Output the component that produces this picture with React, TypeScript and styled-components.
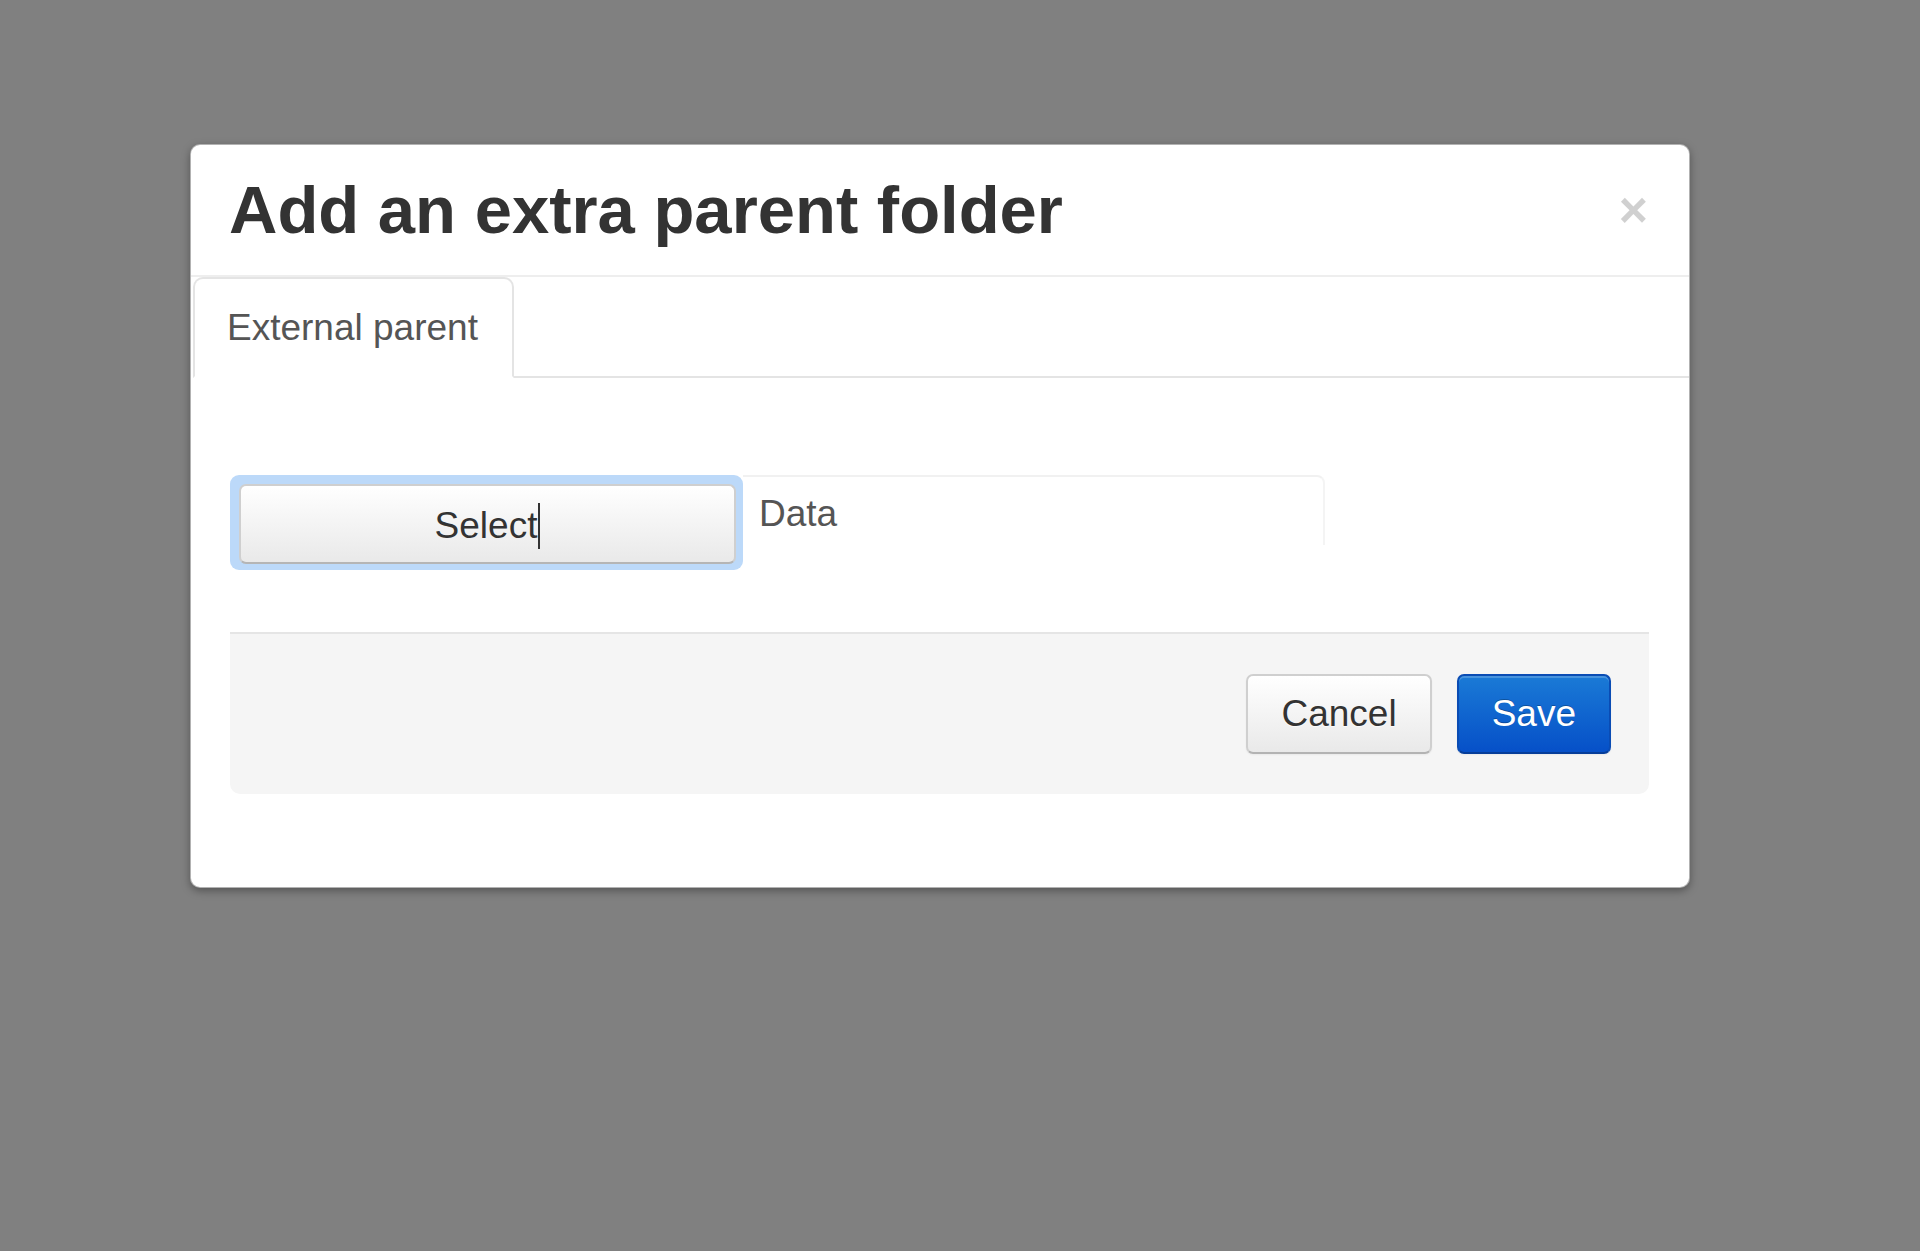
import React from "react";
import styled, { createGlobalStyle } from "styled-components";

const Global = createGlobalStyle`
  html, body {
    margin: 0;
    padding: 0;
    background: #808080;
    font-family: "Liberation Sans", Arial, Helvetica, sans-serif;
  }
  * { box-sizing: border-box; }
`;

const Backdrop = styled.div`
  min-height: 1251px;
  padding-top: 144px;
  padding-left: 190px;
`;

const Modal = styled.div`
  width: 1500px;
  height: 744px;
  background: #fff;
  border: 1px solid rgba(0, 0, 0, 0.3);
  border-radius: 10px;
  box-shadow: 0 3px 8px rgba(0, 0, 0, 0.35);
  display: flex;
  flex-direction: column;
  overflow: hidden;
`;

const Header = styled.div`
  height: 132px;
  display: flex;
  align-items: center;
  justify-content: space-between;
  padding: 0 41px 0 38px;
  border-bottom: 2px solid #eeeeee;
`;

const Title = styled.h3`
  margin: 0;
  font-size: 67px;
  line-height: 74px;
  font-weight: 700;
  color: #333;
`;

const Close = styled.button`
  border: 0;
  background: none;
  padding: 0;
  font-family: "Liberation Sans", Arial, sans-serif;
  font-size: 50px;
  font-weight: 700;
  line-height: 50px;
  color: #000;
  opacity: 0.18;
  cursor: pointer;
`;

const Tabs = styled.div`
  display: flex;
  padding-left: 2px;
`;

const Tab = styled.div`
  height: 101px;
  display: flex;
  align-items: center;
  padding: 0 34px 0 32px;
  font-size: 37px;
  color: #555;
  background: #fff;
  border: 2px solid #e4e4e4;
  border-bottom-color: transparent;
  border-radius: 10px 10px 0 0;
`;

const TabFill = styled.div`
  flex: 1;
  border-bottom: 2px solid #e4e4e4;
`;

const Body = styled.div`
  padding: 97px 40px 0 39px;
  display: flex;
  flex-direction: column;
`;

const FormRow = styled.div`
  display: flex;
  align-items: flex-start;
`;

const FocusRing = styled.div`
  padding: 9px 7px 6px 9px;
  background: #bcd9f9;
  border-radius: 9px;
`;

const SelectButton = styled.button`
  width: 497px;
  height: 80px;
  display: flex;
  align-items: center;
  justify-content: center;
  padding-top: 4px;
  font-family: "Liberation Sans", Arial, sans-serif;
  font-size: 37px;
  color: #333;
  background: linear-gradient(#ffffff, #e9e9e9);
  border: 2px solid #cfcfcf;
  border-bottom-color: #b5b5b5;
  border-radius: 7px;
  box-shadow: inset 0 2px 0 rgba(255, 255, 255, 0.6);
`;

const Caret = styled.span`
  display: inline-block;
  width: 2px;
  height: 46px;
  margin-left: 1px;
  background: #333;
`;

const DataInput = styled.div`
  width: 582px;
  height: 70px;
  padding: 15px 16px 0;
  font-size: 37px;
  line-height: 44px;
  color: #555;
  border-top: 2px solid #f1f1f1;
  border-right: 2px solid #f4f4f4;
  border-radius: 0 8px 0 0;
`;

const Actions = styled.div`
  margin-top: 62px;
  height: 162px;
  display: flex;
  align-items: center;
  justify-content: flex-end;
  gap: 25px;
  padding-right: 38px;
  background: #f5f5f5;
  border-top: 2px solid #e5e5e5;
  border-radius: 0 0 10px 10px;
`;

const ActionButton = styled.button<{ $primary?: boolean }>`
  height: 80px;
  padding: 0 33px;
  font-family: "Liberation Sans", Arial, sans-serif;
  font-size: 37px;
  border-radius: 7px;
  color: ${(p) => (p.$primary ? "#fff" : "#333")};
  background: ${(p) =>
    p.$primary
      ? "linear-gradient(#1a7ad6, #0650c8)"
      : "linear-gradient(#ffffff, #e9e9e9)"};
  border: 2px solid ${(p) => (p.$primary ? "#0a4cb4" : "#cfcfcf")};
  border-bottom-color: ${(p) => (p.$primary ? "#063d99" : "#b3b3b3")};
  text-shadow: ${(p) =>
    p.$primary ? "0 -1px 0 rgba(0,0,0,0.25)" : "0 1px 1px rgba(255,255,255,0.75)"};
  box-shadow: inset 0 2px 0 rgba(255, 255, 255, 0.2), 0 1px 2px rgba(0, 0, 0, 0.05);
`;

export default function App() {
  return (
    <>
      <Global />
      <Backdrop>
        <Modal>
          <Header>
            <Title>Add an extra parent folder</Title>
            <Close aria-label="Close">×</Close>
          </Header>
          <Tabs>
            <Tab>External parent</Tab>
            <TabFill />
          </Tabs>
          <Body>
            <FormRow>
              <FocusRing>
                <SelectButton>
                  Select
                  <Caret />
                </SelectButton>
              </FocusRing>
              <DataInput>Data</DataInput>
            </FormRow>
            <Actions>
              <ActionButton>Cancel</ActionButton>
              <ActionButton $primary>Save</ActionButton>
            </Actions>
          </Body>
        </Modal>
      </Backdrop>
    </>
  );
}
